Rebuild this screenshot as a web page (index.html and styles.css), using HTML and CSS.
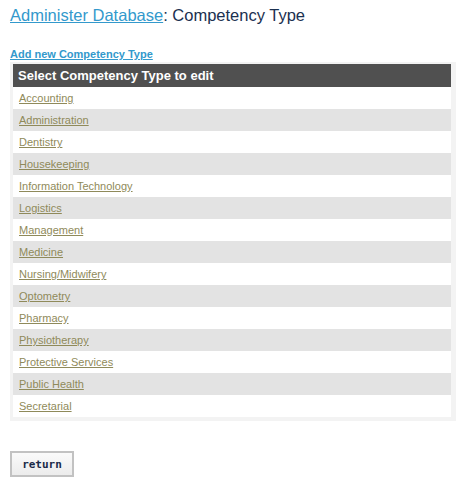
FILE: index.html
```html
<!DOCTYPE html>
<html lang="en">
<head>
    <meta charset="UTF-8">
    <title>Administer Database - Competency Type</title>
    <link rel="stylesheet" href="styles.css">
</head>
<body>

<h1><a href="#">Administer Database</a>: Competency Type</h1>

<a class="add-link" href="#">Add new Competency Type</a>

<div class="frame">
<table class="list">
    <thead>
        <tr><th>Select Competency Type to edit</th></tr>
    </thead>
    <tbody>
        <tr><td><a href="#">Accounting</a></td></tr>
        <tr><td><a href="#">Administration</a></td></tr>
        <tr><td><a href="#">Dentistry</a></td></tr>
        <tr><td><a href="#">Housekeeping</a></td></tr>
        <tr><td><a href="#">Information Technology</a></td></tr>
        <tr><td><a href="#">Logistics</a></td></tr>
        <tr><td><a href="#">Management</a></td></tr>
        <tr><td><a href="#">Medicine</a></td></tr>
        <tr><td><a href="#">Nursing/Midwifery</a></td></tr>
        <tr><td><a href="#">Optometry</a></td></tr>
        <tr><td><a href="#">Pharmacy</a></td></tr>
        <tr><td><a href="#">Physiotherapy</a></td></tr>
        <tr><td><a href="#">Protective Services</a></td></tr>
        <tr><td><a href="#">Public Health</a></td></tr>
        <tr><td><a href="#">Secretarial</a></td></tr>
    </tbody>
</table>
</div>

<button class="btn">return</button>

</body>
</html>
```

FILE: styles.css
```css
body { font-family: "Liberation Sans", Arial, sans-serif; margin: 0; padding: 4px 6px 4px 10px; background: white; }
h1 { font-size: 16.5px; font-weight: normal; color: #1b3050; margin: 0; line-height: 22px; }
h1 a { color: #3399cc; }
.add-link { display: block; margin-top: 21px; font-size: 11px; font-weight: bold; color: #3399cc; line-height: 14px; }
.frame { background: #f3f3f3; padding: 2px 5px 4px 3px; margin-top: 1px; }
.list { width: 100%; border-collapse: collapse; background: white; }
.list th { background: #505050; color: white; font-size: 13px; font-weight: bold; text-align: left; height: 23px; padding: 0 5px; }
.list td { height: 22px; padding: 0 6px; font-size: 11px; }
.list tbody tr:nth-child(even) td { background: #e3e3e3; }
.list td a { color: #8f8a5a; }
.btn { margin-top: 30px; width: 64px; height: 26px; border: 2px solid #c2c2c2; background: linear-gradient(#fafafa, #ececec); font-family: "DejaVu Sans Mono", monospace; font-weight: bold; font-size: 11px; color: #1a2a48; cursor: pointer; padding: 0; }
```
